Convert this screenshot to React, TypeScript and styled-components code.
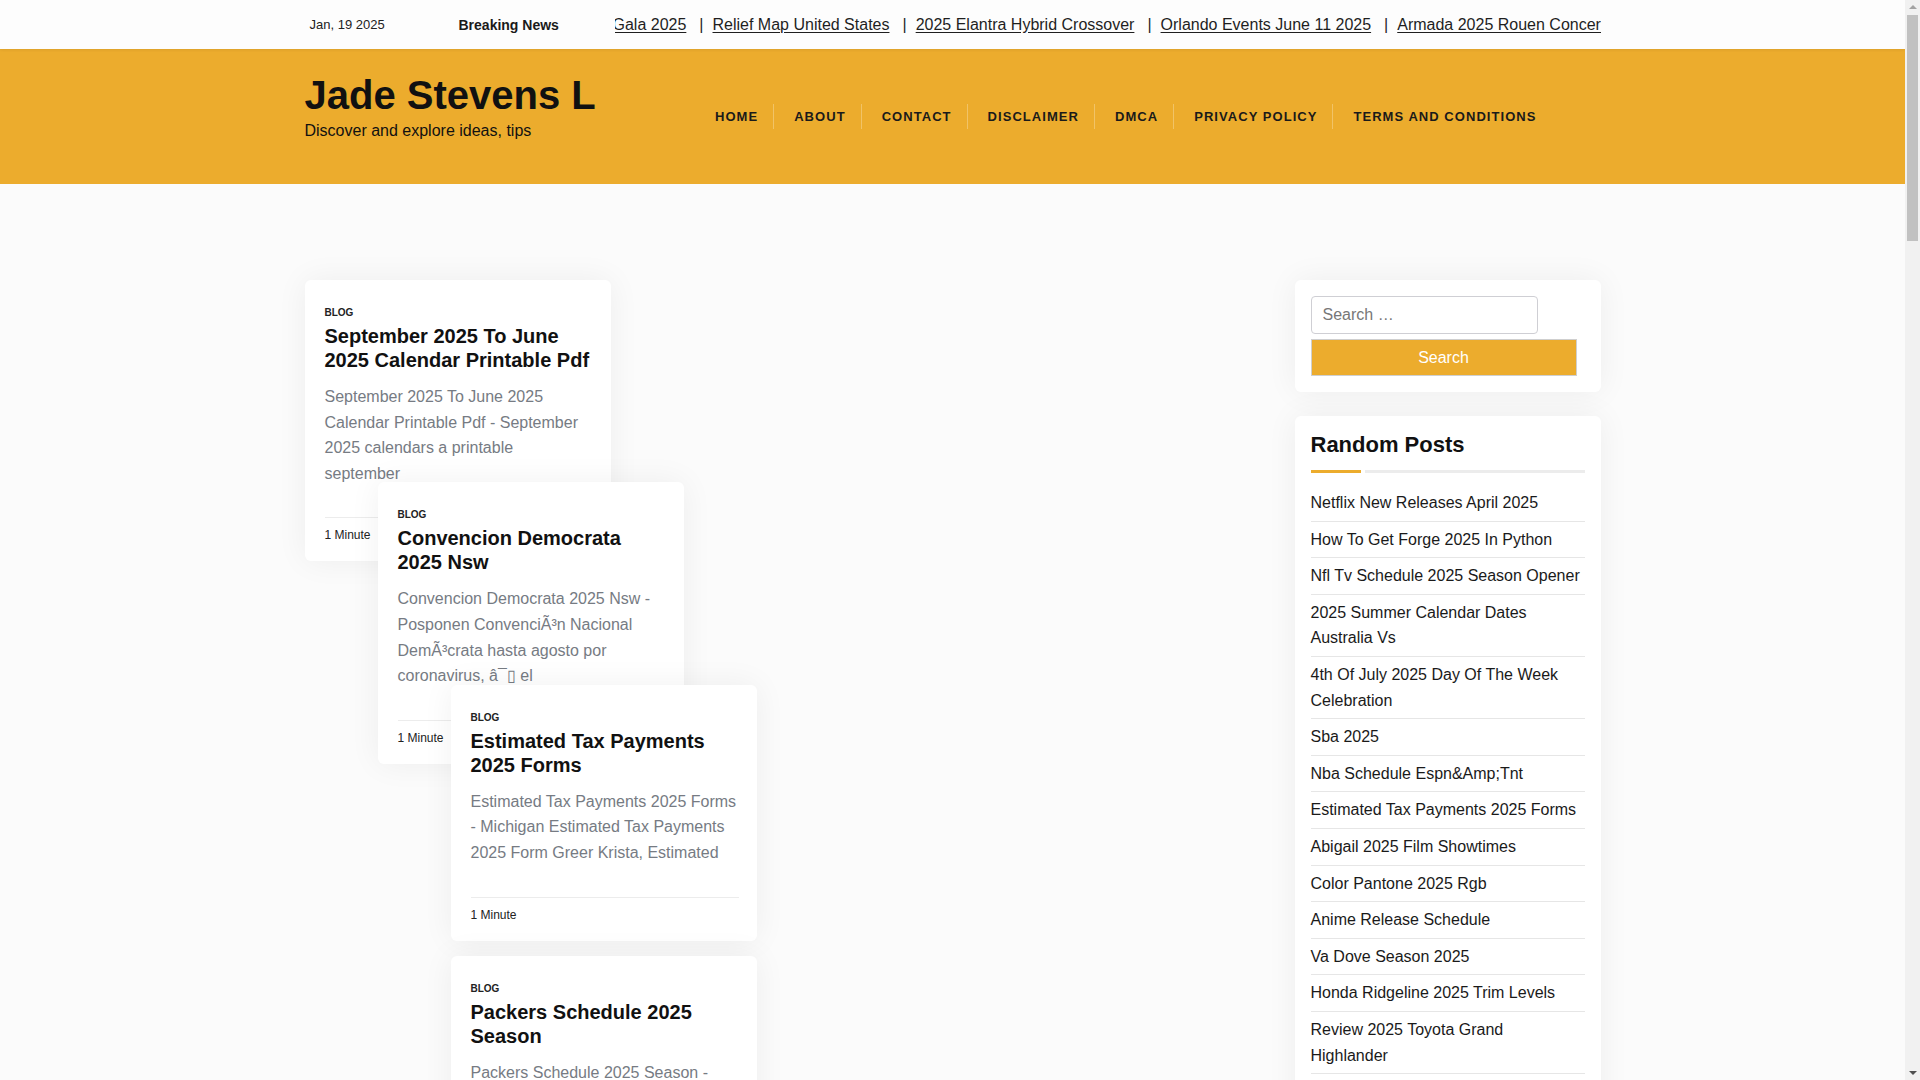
import React from "react";
import styled, { createGlobalStyle } from "styled-components";

const GlobalStyle = createGlobalStyle`
  html, body {
    margin: 0;
    padding: 0;
    background: #fbfbfb;
    font-family: "Liberation Sans", Arial, sans-serif;
    color: #1d1d1d;
  }
  * { box-sizing: border-box; }
  a { color: inherit; }
`;

const ORANGE = "#ecac2d";

const Page = styled.div`
  width: 1905px;
  min-height: 5000px;
`;

const Container = styled.div`
  width: 1296px;
  margin: 0 auto;
`;

/* classic window scrollbar seen on the right edge of the screenshot */
const ScrollTrack = styled.div`
  position: fixed;
  top: 0;
  right: 0;
  width: 15px;
  height: 100vh;
  background: #f1f1f1;
  z-index: 10;
`;

const ScrollThumb = styled.div`
  position: absolute;
  top: 15px;
  left: 2px;
  width: 11px;
  height: 226px;
  background: #c1c1c1;
`;

const ScrollArrow = styled.div<{ $down?: boolean }>`
  position: absolute;
  left: 4px;
  width: 0;
  height: 0;
  border-left: 4px solid transparent;
  border-right: 4px solid transparent;
  ${(p) =>
    p.$down
      ? `bottom: 5px; border-top: 4px solid #505050;`
      : `top: 5px; border-bottom: 4px solid #a3a3a3;`}
`;

const TopBar = styled.div`
  background: #fdfdfd;
  box-shadow: 0 1px 3px rgba(0, 0, 0, 0.07);
  position: relative;
  z-index: 2;
`;

const TopBarInner = styled(Container)`
  display: flex;
  align-items: center;
  height: 49px;
`;

const DateText = styled.div`
  width: 154px;
  padding-left: 5px;
  font-size: 13px;
  color: #222;
`;

const BreakingLabel = styled.div`
  width: 156px;
  font-size: 14px;
  font-weight: 700;
  color: #1a1a1a;
`;

const Ticker = styled.div`
  flex: 1;
  overflow: hidden;
  white-space: nowrap;
  font-size: 16px;
  color: #1f1f1f;
`;

const TickerTrack = styled.div`
  display: inline-block;
  margin-left: -2px;
`;

const TickerLink = styled.a`
  text-decoration: underline;
  text-underline-offset: 2px;
`;

const TickerSep = styled.span`
  margin: 0 9px 0 13px;
`;

const Header = styled.header`
  background: ${ORANGE};
`;

const HeaderInner = styled(Container)`
  display: flex;
  align-items: center;
  justify-content: space-between;
  height: 135px;
`;

const Brand = styled.div`
  padding-bottom: 20px;
`;

const SiteTitle = styled.h1`
  margin: 0;
  font-size: 40px;
  line-height: 48px;
  font-weight: 700;
  color: #111;
`;

const Tagline = styled.p`
  margin: 0;
  font-size: 16px;
  line-height: 24px;
  color: #111;
`;

const NavList = styled.ul`
  display: flex;
  list-style: none;
  margin: 0 49px 0 0;
  padding: 0;
`;

const NavItem = styled.li<{ $first?: boolean }>`
  padding: 0 15px 0 20px;
  height: 25px;
  line-height: 25px;
  border-left: ${(p) => (p.$first ? "none" : "1px solid rgba(255, 255, 255, 0.28)")};
  font-size: 13px;
  font-weight: 700;
  letter-spacing: 1.05px;
  text-transform: uppercase;
  color: #1a1a1a;
`;

const Content = styled(Container)`
  display: flex;
  align-items: flex-start;
  justify-content: space-between;
  padding-top: 96px;
`;

const MainColumn = styled.main`
  display: flex;
  flex-direction: column;
  align-items: flex-start;
`;

const Card = styled.article<{ $shift: number; $pull: number }>`
  position: relative;
  width: 306px;
  margin-left: ${(p) => p.$shift}px;
  margin-top: ${(p) => p.$pull}px;
  padding: 27px 18px 17px 20px;
  background: #fff;
  border-radius: 6px;
  box-shadow: 0 0 32px rgba(0, 0, 0, 0.06);
`;

const Category = styled.div`
  font-size: 10px;
  line-height: 12px;
  font-weight: 700;
  text-transform: uppercase;
  color: #222;
`;

const CardTitle = styled.h2`
  margin: 5px 0 0;
  font-size: 20px;
  line-height: 24px;
  font-weight: 700;
  color: #111;
`;

const Excerpt = styled.p`
  margin: 12px 0 31px;
  font-size: 16px;
  line-height: 25.6px;
  color: #767b83;
`;

const CardFooter = styled.div`
  border-top: 1px solid #ececec;
  padding-top: 8px;
  font-size: 12px;
  line-height: 18px;
  color: #222;
`;

const Sidebar = styled.aside`
  width: 306px;
  display: flex;
  flex-direction: column;
  gap: 24px;
`;

const Widget = styled.section`
  background: #fff;
  border-radius: 6px;
  padding: 16px;
  box-shadow: 0 0 32px rgba(0, 0, 0, 0.06);
`;

const SearchInput = styled.input`
  display: block;
  width: 227px;
  height: 38px;
  padding: 0 11px;
  border: 1px solid #cfcfd4;
  border-radius: 4px;
  font-family: inherit;
  font-size: 16px;
  color: #333;
  background: #fff;
  &::placeholder {
    color: #777;
  }
`;

const SearchButton = styled.button`
  display: block;
  width: 266px;
  height: 37px;
  margin-top: 5px;
  border: 1px solid #cfcfcf;
  background: ${ORANGE};
  color: #fff;
  font-family: inherit;
  font-size: 16px;
`;

const WidgetTitle = styled.h3`
  margin: 0;
  font-size: 22px;
  line-height: 26px;
  font-weight: 700;
  color: #111;
`;

const TitleRule = styled.div`
  display: flex;
  gap: 4px;
  margin-top: 12px;
`;

const RuleBar = styled.span<{ $accent?: boolean }>`
  height: 3px;
  flex: ${(p) => (p.$accent ? "0 0 50px" : "1")};
  background: ${(p) => (p.$accent ? ORANGE : "#ececec")};
`;

const PostList = styled.ul`
  list-style: none;
  margin: 12px 0 0;
  padding: 0;
`;

const PostItem = styled.li`
  padding: 5px 0;
  border-bottom: 1px solid #e6e6e6;
  font-size: 16px;
  line-height: 25.6px;
  color: #1a1a1a;
`;

const tickerItems = [
  "Gala 2025",
  "Relief Map United States",
  "2025 Elantra Hybrid Crossover",
  "Orlando Events June 11 2025",
  "Armada 2025 Rouen Concert",
  "Lunar New Year 2025 Animal",
  "Nba Schedule Espn&Amp;Tnt",
];

const navItems = [
  "Home",
  "About",
  "Contact",
  "Disclaimer",
  "DMCA",
  "Privacy Policy",
  "Terms and Conditions",
];

const posts = [
  {
    title: "September 2025 To June 2025 Calendar Printable Pdf",
    excerpt:
      "September 2025 To June 2025 Calendar Printable Pdf - September 2025 calendars a printable september",
    shift: 0,
    pull: 0,
  },
  {
    title: "Convencion Democrata 2025 Nsw",
    excerpt:
      "Convencion Democrata 2025 Nsw - Posponen ConvenciÃ³n Nacional DemÃ³crata hasta agosto por coronavirus, â¯▯ el",
    shift: 73,
    pull: -79,
  },
  {
    title: "Estimated Tax Payments 2025 Forms",
    excerpt:
      "Estimated Tax Payments 2025 Forms - Michigan Estimated Tax Payments 2025 Form Greer Krista, Estimated",
    shift: 146,
    pull: -79,
  },
  {
    title: "Packers Schedule 2025 Season",
    excerpt:
      "Packers Schedule 2025 Season - Green Bay Packers 2025 schedule, dates and opponents for the",
    shift: 146,
    pull: 15,
  },
];

const randomPosts = [
  "Netflix New Releases April 2025",
  "How To Get Forge 2025 In Python",
  "Nfl Tv Schedule 2025 Season Opener",
  "2025 Summer Calendar Dates Australia Vs",
  "4th Of July 2025 Day Of The Week Celebration",
  "Sba 2025",
  "Nba Schedule Espn&Amp;Tnt",
  "Estimated Tax Payments 2025 Forms",
  "Abigail 2025 Film Showtimes",
  "Color Pantone 2025 Rgb",
  "Anime Release Schedule",
  "Va Dove Season 2025",
  "Honda Ridgeline 2025 Trim Levels",
  "Review 2025 Toyota Grand Highlander",
  "Orlando Events June 11 2025",
  "Relief Map United States",
];

export default function App() {
  return (
    <Page>
      <GlobalStyle />
      <ScrollTrack>
        <ScrollArrow />
        <ScrollThumb />
        <ScrollArrow $down />
      </ScrollTrack>
      <TopBar>
        <TopBarInner>
          <DateText>Jan, 19 2025</DateText>
          <BreakingLabel>Breaking News</BreakingLabel>
          <Ticker>
            <TickerTrack>
              {tickerItems.map((item, i) => (
                <React.Fragment key={item}>
                  {i > 0 && <TickerSep>|</TickerSep>}
                  <TickerLink href="#">{item}</TickerLink>
                </React.Fragment>
              ))}
            </TickerTrack>
          </Ticker>
        </TopBarInner>
      </TopBar>

      <Header>
        <HeaderInner>
          <Brand>
            <SiteTitle>Jade Stevens L</SiteTitle>
            <Tagline>Discover and explore ideas, tips</Tagline>
          </Brand>
          <nav>
            <NavList>
              {navItems.map((item, i) => (
                <NavItem key={item} $first={i === 0}>
                  {item}
                </NavItem>
              ))}
            </NavList>
          </nav>
        </HeaderInner>
      </Header>

      <Content>
        <MainColumn>
          {posts.map((post) => (
            <Card key={post.title} $shift={post.shift} $pull={post.pull}>
              <Category>Blog</Category>
              <CardTitle>{post.title}</CardTitle>
              <Excerpt>{post.excerpt}</Excerpt>
              <CardFooter>1 Minute</CardFooter>
            </Card>
          ))}
        </MainColumn>

        <Sidebar>
          <Widget>
            <SearchInput placeholder="Search …" />
            <SearchButton>Search</SearchButton>
          </Widget>
          <Widget>
            <WidgetTitle>Random Posts</WidgetTitle>
            <TitleRule>
              <RuleBar $accent />
              <RuleBar />
            </TitleRule>
            <PostList>
              {randomPosts.map((p) => (
                <PostItem key={p}>{p}</PostItem>
              ))}
            </PostList>
          </Widget>
        </Sidebar>
      </Content>
    </Page>
  );
}
